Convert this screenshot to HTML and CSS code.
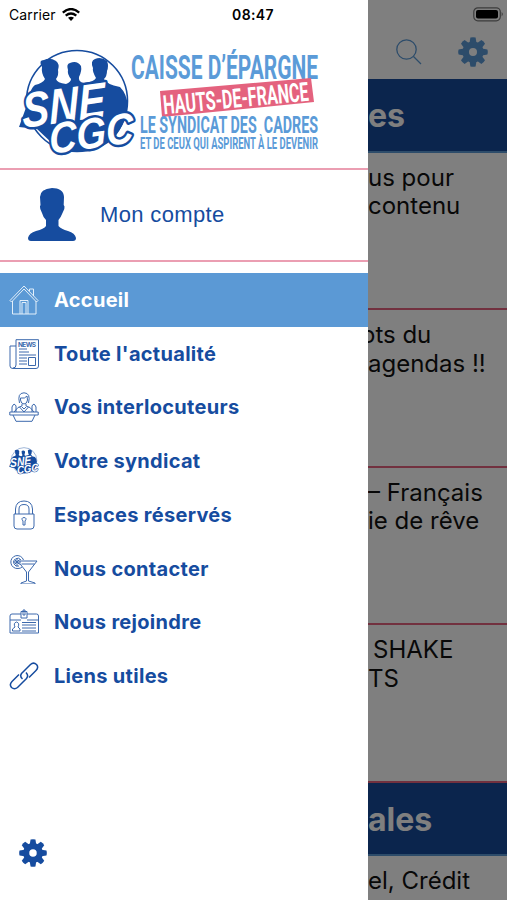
FILE: index.html
```
<!DOCTYPE html>
<html lang="fr">
<head>
  <meta charset="UTF-8" />
  <meta name="viewport" content="width=device-width, initial-scale=1.0"/>
  <title>SNE CGC | Caisse d'Épargne Hauts-de-France</title>
  <link rel="stylesheet" href="styles.css">
</head>
<body>

  <svg class="defs" width="0" height="0">
    <symbol id="gear" viewBox="-15 -15 30 30">
      <circle r="7.3" fill="none" stroke="currentColor" stroke-width="6.6"/>
      <g id="teeth" fill="currentColor">
        <path id="tooth" d="M-3.5-9L-2.6-14.4Q0-15.2 2.6-14.4L3.5-9z"/>
        <use href="#tooth" transform="rotate(45)"/>
        <use href="#tooth" transform="rotate(90)"/>
        <use href="#tooth" transform="rotate(135)"/>
        <use href="#tooth" transform="rotate(180)"/>
        <use href="#tooth" transform="rotate(225)"/>
        <use href="#tooth" transform="rotate(270)"/>
        <use href="#tooth" transform="rotate(315)"/>
      </g>
    </symbol>
    <symbol id="emblem" viewBox="18 48 118 110">
      <circle cx="77" cy="101" r="50.5" fill="#fff" stroke="#164c9f" stroke-width="1.6"/>
      <path fill="#164c9f" d="M28 102C29 93 32 87 35 85Q43 83 45 79Q41 73 42 67Q38 60 44 60Q50 57 56 61Q60 64 58 70Q59 75 56 79Q57 83 66 84Q71 82 71 79Q67 74 68 70Q66 64 70 63Q77 60 81 66Q82 71 79 77Q78 82 84 83Q94 82 96 78Q92 71 93 68Q90 61 95 59Q101 56 107 61Q109 66 107 71Q107 76 104 79Q106 84 120 87Q127 94 127.500 105Q124 135 103 146Q78 158 53 144L37 129L19 127Z"/>
      <g class="emblem-text">
        <text transform="translate(23 128) rotate(-8) skewX(-5)" font-size="49" textLength="84" lengthAdjust="spacingAndGlyphs">SNE</text>
        <text transform="translate(50 154) rotate(-8) skewX(-5)" font-size="43" textLength="85" lengthAdjust="spacingAndGlyphs">CGC</text>
      </g>
    </symbol>
  </svg>

  <div class="app">
    <aside class="drawer">
      <div class="status">
        <span class="carrier">Carrier</span>
        <svg class="wifi" viewBox="0 0 18 13" fill="none" stroke="#000" stroke-width="2.3">
          <path d="M.8 4.600Q9-2.500 17.200 4.600M3.700 7.700Q9 3.400 14.300 7.700"/>
          <path d="M6 9.800Q9 7.500 12 9.800L9 13z" fill="#000" stroke="none"/>
        </svg>
        <span class="clock">08:47</span>
      </div>

      <svg class="logo" viewBox="0 28 368 140">
        <use href="#emblem" x="18" y="48" width="118" height="110"/>
        <g class="logo-text">
          <text transform="translate(131 79) scale(1 1.380)" font-size="24" textLength="187" lengthAdjust="spacingAndGlyphs">CAISSE D’ÉPARGNE</text>
          <path fill="#e4627e" d="M160 91L311 78L314 102L162 117z"/>
          <text class="region" transform="translate(164 114.300) rotate(-5.400) scale(1 1.350)" font-size="19.500" textLength="146" lengthAdjust="spacingAndGlyphs">HAUTS-DE-FRANCE</text>
          <text transform="translate(140 133) scale(1 1.350)" font-size="17.500" textLength="178" lengthAdjust="spacingAndGlyphs">LE SYNDICAT DES &#160;CADRES</text>
          <text transform="translate(140 149) scale(1 1.300)" font-size="12.500" textLength="178" lengthAdjust="spacingAndGlyphs">ET DE CEUX QUI ASPIRENT À LE DEVENIR</text>
        </g>
      </svg>

      <a class="account">
        <svg viewBox="0 0 50 54">
          <path fill="#164c9f" d="M25 0C32 0 37 3 37 9L36.700 17Q38 18 37.300 21L35.500 25Q34 29 31.500 32V38Q34 41 41 43Q48 45 49 50Q49 53 46 53H4Q1 53 1 50Q2 45 9 43Q17 41 19 38V32Q16 29 15 25L13.300 21Q12.500 18 13.500 17L13 9Q13 1 25 0z"/>
        </svg>
        <span>Mon compte</span>
      </a>

      <nav class="menu">
        <a class="item active">
          <svg viewBox="0 0 30 30"><path d="M1 15.500L15 1L29 15.500L27.500 17L15 4L2.500 17zM3.500 16V29H27V16M20.500 6V4H24.500V11M11 29V15.500H19V29M13 29V17.500H17V29"/></svg>
          <span>Accueil</span>
        </a>
        <a class="item">
          <svg viewBox="0 0 30 30"><path d="M7 7H1V27Q1 29.500 4 29.500H27Q29.500 29.500 29.500 27V.7H7V26Q7 29 4 29M10 10H18M10 13H20M10 16H27M10 19H18M10 22H18M10 25H18M19.500 18.500H26.500V26.500H19.500z"/><text class="news" x="9" y="7.500" textLength="18">NEWS</text></svg>
          <span>Toute l'actualité</span>
        </a>
        <a class="item">
          <svg viewBox="0 0 30 30"><path d="M10.500 11Q8 1 15 .8Q22 1 19.500 11M11.500 6Q16 7 18 4L18.500 8Q18 12 15 12Q12 12 11.500 8zM13 12V14L9 15.500L5 20M17 12V14L21 15.500L25 20M10.500 15L15 20L19.500 15M13 15L15 17L17 15M3 20V15Q5 10 7 14V20M27 20V15Q25 10 23 14V20M.8 20H29.200V23H.8zM4 23L7 29.300H23L26 23"/></svg>
          <span>Vos interlocuteurs</span>
        </a>
        <a class="item">
          <svg class="mini"><use href="#emblem"/></svg>
          <span>Votre syndicat</span>
        </a>
        <a class="item">
          <svg viewBox="0 0 30 30"><path d="M6.500 14V9Q7 1 15 1Q23 1 23.500 9V14M10 14V9Q10 4.500 15 4.500Q20 4.500 20 9V14M5 14H25V26Q25 29 22 29H8Q5 29 5 26zM14 21Q11.500 18 15 17.500Q18.500 18 16 21L16 25H14z"/></svg>
          <span>Espaces réservés</span>
        </a>
        <a class="item">
          <svg viewBox="0 0 30 30"><path d="M10 7H28L19.500 18V27L26 29V30H12V29L17.500 27V18L10 8.500M12.500 10H25.500M14.500 6A6.500 6.500 0 1 0 9 14.500Q11.500 14.500 13 13M12 6A4 4 0 1 0 10 12M8 4V12M4 8H12M5.500 5.500L10.500 10.500M10.500 5.500L5.500 10.500"/></svg>
          <span>Nous contacter</span>
        </a>
        <a class="item">
          <svg viewBox="0 0 30 30"><path d="M12 7H3Q1 7 1 9V26H29.500V9Q29.500 7 27.500 7H18M1 13H12M18 13H29.500M12 4.500H18V11H12zM14 4.500V3H16V8H14zM13 15.500H27M13 18H27M13 21H27M13 24H27M3.500 24V22L6 20Q4 16 7.500 15Q11 16 9 20L11 22V24z"/></svg>
          <span>Nous rejoindre</span>
        </a>
        <a class="item">
          <svg class="link" viewBox="0 0 30 30"><path d="M12.500 12.500L21.500 3.500Q24.500 .8 27.500 3.500Q30 6.500 27 9.500L20 16.500M12.500 12.500Q10.500 15.500 13.500 18M17 11.500Q20 14.500 17.500 17.500L8.500 26.500Q5.500 29 2.500 26.500Q0 23.500 3 20.500L10 13.500"/></svg>
          <span>Liens utiles</span>
        </a>
      </nav>

      <svg class="settings"><use href="#gear"/></svg>
    </aside>

    <main class="page">
      <header class="topbar">
        <svg class="battery" viewBox="0 0 31 15">
          <rect x=".8" y=".8" width="26.500" height="13" rx="4" fill="none" stroke="#777" stroke-width="1.200"/>
          <rect x="3" y="3" width="22" height="8.600" rx="2"/>
          <path d="M28.600 5Q31 7 28.600 9.500z" fill="#777"/>
        </svg>
        <svg class="search" viewBox="0 0 26 26" fill="none" stroke="#5b99d5" stroke-width="1.300"><circle cx="10.500" cy="10.500" r="9.700"/><path d="M17.500 17.500L25 25"/></svg>
        <svg class="cog"><use href="#gear"/></svg>
      </header>
      <h2>es</h2>
      <article>us pour<br>contenu</article>
      <article class="cut">ots du<br>agendas !!</article>
      <article>– Français<br>ie de rêve</article>
      <article><span class="indent">SHAKE</span><br>TS</article>
      <h2>ales</h2>
      <article>el, Crédit</article>
    </main>
  </div>

</body>
</html>
```
FILE: styles.css
```
* {
  box-sizing: border-box;
}

body {
  margin: 0;
  font-family: Inter, "Liberation Sans", sans-serif;
  background-color: #fff;
}

.defs {
  position: absolute;
}

.app {
  display: flex;
  width: 507px;
  height: 900px;
  overflow: hidden;
}

/* drawer */
.drawer {
  display: flex;
  flex-direction: column;
  width: 368px;
  flex-shrink: 0;
}

.status {
  display: flex;
  align-items: center;
  height: 28px;
  padding-left: 9px;
  font-size: 14px;
}

.carrier {
  width: 53px;
  letter-spacing: 0.1px;
}

.wifi {
  width: 18px;
  height: 13px;
}

.clock {
  margin-left: 152px;
  font-weight: 600;
  letter-spacing: 0.4px;
}

.logo {
  width: 368px;
  height: 140px;
}

.logo-text {
  font-family: "Roboto", "Liberation Sans", sans-serif;
  font-weight: 700;
  fill: #5b9bd8;
}

.logo-text .region {
  fill: #fff;
}

.emblem-text {
  font-family: "Liberation Sans", sans-serif;
  font-weight: 700;
  font-style: italic;
  fill: #fff;
  stroke: #164c9f;
  stroke-width: 5px;
  stroke-linejoin: round;
  paint-order: stroke;
}

.account {
  display: flex;
  align-items: center;
  height: 94px;
  padding-left: 27px;
  border-top: 2px solid #eb9eb2;
  border-bottom: 2px solid #eb9eb2;
  font-family: "Liberation Sans", sans-serif;
  font-size: 22px;
  letter-spacing: 0.35px;
  color: #164c9f;
}

.account svg {
  width: 50px;
  height: 54px;
  margin-right: 23px;
}

.menu {
  margin-top: 11px;
}

.item {
  display: flex;
  align-items: center;
  height: 53.75px;
  padding-left: 9px;
  font-size: 20px;
  font-weight: 700;
  letter-spacing: 0.3px;
  color: #164c9f;
}

.item svg {
  width: 30px;
  height: 30px;
  margin-right: 15px;
  fill: none;
  stroke: #3c69ad;
  stroke-width: 1;
}

.item .link {
  stroke: #164c9f;
  stroke-width: 1.5;
}

.item .mini {
  stroke: none;
}

.item .news {
  font-size: 6.5px;
  letter-spacing: 0;
  fill: #3c69ad;
  stroke: none;
}

.active {
  background-color: #5b99d5;
  color: #fff;
}

.item.active svg {
  stroke: #e3effa;
}

.settings {
  width: 28px;
  height: 28px;
  margin: auto 0 33px 19px;
  color: #164c9f;
}

/* page behind the drawer */
.page {
  position: relative;
  flex: 1;
  min-width: 0;
  overflow: hidden;
  white-space: nowrap;
}

.page::after {
  content: "";
  position: absolute;
  inset: 0;
  background-color: rgba(0, 0, 0, 0.5);
}

.topbar {
  display: grid;
  grid-template-columns: 74px 30px;
  grid-template-rows: 28px 51px;
  justify-content: end;
  align-items: center;
  height: 79px;
  padding-right: 19px;
}

.battery {
  grid-column: 1 / 3;
  justify-self: end;
  width: 31px;
  height: 15px;
  margin-right: -16px;
}

.search {
  width: 26px;
  height: 26px;
  margin-left: 12px;
  margin-top: -3px;
}

.cog {
  width: 30px;
  height: 30px;
  margin-top: -3px;
  color: #5b99d5;
}

h2 {
  height: 73.5px;
  margin: 0;
  border-bottom: 2px solid #5b99d5;
  background-color: #164a9a;
  color: #fff;
  font-size: 32px;
  font-weight: 700;
  line-height: 74px;
}

article {
  height: 157.5px;
  padding-top: 11px;
  border-bottom: 2px solid #e4627e;
  font-size: 24px;
  line-height: 28.5px;
  color: #111;
}

.cut {
  text-indent: -7px;
}

.indent {
  margin-left: 5px;
}
```
